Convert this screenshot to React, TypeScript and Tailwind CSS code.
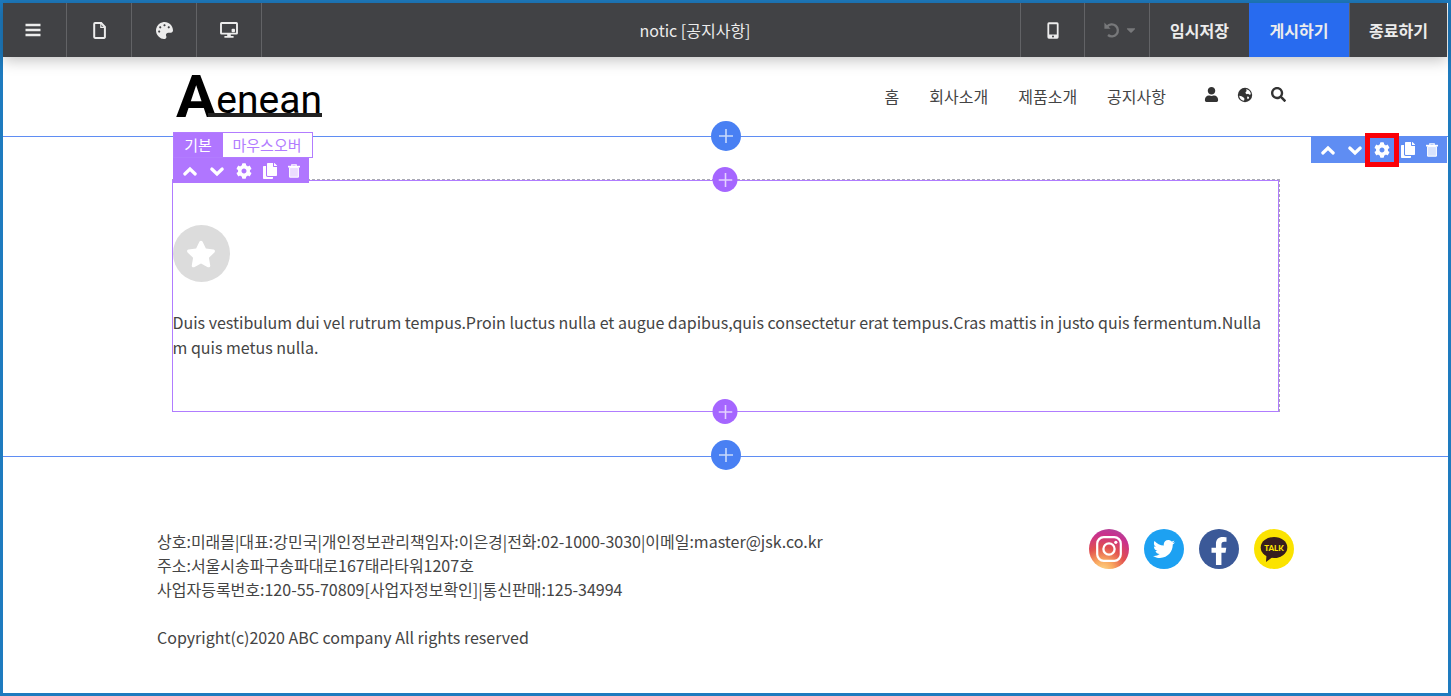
import type { ReactNode } from 'react'
import { FaCaretDown, FaCog, FaCopy, FaFacebookF, FaPalette, FaSearch, FaStar, FaTwitter, FaUser } from 'react-icons/fa'

const menu = ['홈', '회사소개', '제품소개', '공지사항']

function MenuIcon() {
  return (
    <svg viewBox="0 0 16 16" className="size-4" stroke="currentColor" strokeWidth="2.6" aria-hidden="true">
      <path d="M.5 3h15M.5 8h15M.5 13h15" />
    </svg>
  )
}

function FileIcon() {
  return (
    <svg viewBox="0 0 13 17" className="h-[17px] w-[13px]" fill="none" stroke="currentColor" aria-hidden="true">
      <path d="M2 1.1h6.2L11.9 5v10.1a.8.8 0 0 1-.8.8H2a.8.8 0 0 1-.8-.8V1.9a.8.8 0 0 1 .8-.8z" strokeWidth="2" />
      <path d="M7.8 1.2v4.1h4" strokeWidth="1.2" />
    </svg>
  )
}

function MonitorIcon() {
  return (
    <svg viewBox="0 0 18 16" className="h-4 w-[18px]" fill="none" aria-hidden="true">
      <rect x="1" y="1" width="16" height="10.6" rx="0.6" stroke="currentColor" strokeWidth="1.9" />
      <rect x="11.6" y="6.8" width="3.4" height="3.4" rx="0.9" fill="currentColor" />
      <path d="M7.2 12h3.6v2h2.8v1.8H4.4V14h2.8z" fill="currentColor" />
    </svg>
  )
}

function PhoneIcon() {
  return (
    <svg viewBox="0 0 12 17" className="h-[17px] w-3" aria-hidden="true">
      <path
        d="M2 .3h8A1.6 1.6 0 0 1 11.6 2v13a1.6 1.6 0 0 1-1.6 1.7H2A1.6 1.6 0 0 1 .4 15V2A1.6 1.6 0 0 1 2 .3zM2.2 2.2v10.2h7.6V2.2zM6 13.5a1 1 0 1 0 0 2 1 1 0 0 0 0-2z"
        fill="currentColor"
        fillRule="evenodd"
      />
    </svg>
  )
}

function UndoIcon() {
  return (
    <svg viewBox="0 0 16 16" className="size-4" fill="none" aria-hidden="true">
      <path d="M3.2 4.6A6 6 0 1 1 4 13" stroke="currentColor" strokeWidth="2.3" />
      <path d="M.4.6v6.2h6.2L4.5 4.7z" fill="currentColor" />
    </svg>
  )
}

function GlobeIcon() {
  return (
    <svg viewBox="0 0 16 16" className="size-4" aria-hidden="true">
      <circle cx="8" cy="8" r="7.2" fill="currentColor" />
      <path d="M9 2.2a6 6 0 0 1 4.9 5l-1.4.5-1.4-1-1.4.6-1.3-1.2.3-1.2 1-.9z" fill="white" />
      <path d="M2.2 8.7l2.4.5 2 1.2.9 1.4-.5 2a6 6 0 0 1-4.8-5.1z" fill="white" />
      <path d="M10.6 9.3l1.3.6.2 1.2-1.2 1.2-.9-1.2z" fill="white" />
    </svg>
  )
}

function ChevronIcon({ d }: { d: string }) {
  return (
    <svg viewBox="0 0 16 16" className="size-4" fill="none" stroke="currentColor" strokeWidth="3.2" aria-hidden="true">
      <path d={d} strokeLinecap="round" />
    </svg>
  )
}

function TrashIcon() {
  return (
    <svg viewBox="0 0 12 14" className="h-3.5 w-3" aria-hidden="true">
      <path d="M3.8 2V.8h4.4V2" fill="none" stroke="currentColor" strokeWidth="1.2" />
      <path d="M0 1.8h12v1.7H0z" fill="currentColor" />
      <path d="M1.6 3.6h8.8v9.6H1.6z" fill="currentColor" fillOpacity="0.75" stroke="currentColor" />
    </svg>
  )
}

function InstagramIcon() {
  return (
    <svg viewBox="0 0 26 26" className="size-[26px]" fill="none" stroke="currentColor" aria-hidden="true">
      <rect x="1.2" y="1.2" width="23.6" height="23.6" rx="6.5" strokeWidth="2.2" />
      <circle cx="13" cy="13" r="5.6" strokeWidth="2.3" />
      <circle cx="19.8" cy="6.3" r="1.6" fill="currentColor" stroke="none" />
    </svg>
  )
}

function BarButton({ label, className, children }: { label?: string; className?: string; children: ReactNode }) {
  return (
    <button
      type="button"
      aria-label={label}
      className={`flex h-full items-center justify-center border-[#626366] ${className ?? ''}`}
    >
      {children}
    </button>
  )
}

function TopBar() {
  return (
    <header className="relative z-10 mr-px flex h-[54px] items-center bg-[#414245] text-[#ececec] shadow-[0_3px_14px_rgba(0,0,0,0.25)]">
      <div className="flex h-full flex-1">
        <BarButton label="메뉴" className="w-16 border-r pr-1">
          <MenuIcon />
        </BarButton>
        <BarButton label="페이지" className="w-[65px] border-r">
          <FileIcon />
        </BarButton>
        <BarButton label="디자인" className="w-[65px] border-r">
          <FaPalette className="size-[17px]" />
        </BarButton>
        <BarButton label="화면" className="w-[65px] border-r">
          <MonitorIcon />
        </BarButton>
      </div>
      <h1 className="pr-[60px] text-base">notic [공지사항]</h1>
      <div className="flex h-full flex-1 justify-end font-bold">
        <BarButton label="모바일" className="w-16 border-l">
          <PhoneIcon />
        </BarButton>
        <BarButton label="실행 취소" className="w-[65px] gap-1 border-l pl-2 text-[#77787a]">
          <UndoIcon />
          <FaCaretDown className="size-3.5" />
        </BarButton>
        <BarButton className="w-[100px] border-l">임시저장</BarButton>
        <BarButton className="w-[100px] bg-[#286bef]">게시하기</BarButton>
        <BarButton className="w-[98px] border-l">종료하기</BarButton>
      </div>
    </header>
  )
}

function SiteHeader() {
  return (
    <div className="mx-auto flex h-[79px] w-full max-w-[1121px] items-center justify-between pl-[11px]">
      <a href="#" className="flex items-end font-[Roboto,sans-serif] text-black">
        <span className="text-[60px] leading-[41px] font-bold">A</span>
        <span className="-ml-2 border-b-4 border-[#222] pl-2 text-[39px] leading-[25px]">enean</span>
      </a>
      <nav className="flex items-center pb-[2px] text-base text-[#444]">
        <div className="flex gap-[30px]">
          {menu.map((item) => (
            <a key={item} href="#">
              {item}
            </a>
          ))}
        </div>
        <div className="ml-[38px] flex gap-[18px] pb-[2px] text-[#333]">
          <a href="#" aria-label="로그인">
            <FaUser className="size-[15px]" />
          </a>
          <a href="#" aria-label="언어">
            <GlobeIcon />
          </a>
          <a href="#" aria-label="검색">
            <FaSearch className="size-[15px]" />
          </a>
        </div>
      </nav>
    </div>
  )
}

function Tools({ className, marked }: { className: string; marked?: boolean }) {
  return (
    <div className={`flex items-center gap-[11px] px-[9px] text-white ${className}`}>
      <button type="button" aria-label="위로">
        <ChevronIcon d="M2.8 11L8 6l5.2 5" />
      </button>
      <button type="button" aria-label="아래로">
        <ChevronIcon d="M2.8 6L8 11l5.2-5" />
      </button>
      <button type="button" aria-label="설정" className="relative">
        <FaCog className="size-4" />
        {marked && <span className="absolute -inset-[9px] border-5 border-[#fb0007]" />}
      </button>
      <button type="button" aria-label="복사">
        <FaCopy className="h-4 w-3.5" />
      </button>
      <button type="button" aria-label="삭제">
        <TrashIcon />
      </button>
    </div>
  )
}

function AddButton({ className, label }: { className: string; label: string }) {
  return (
    <button
      type="button"
      aria-label={label}
      className={`absolute left-1/2 flex -translate-x-1/2 items-center justify-center rounded-full text-white/70 ${className}`}
    >
      <svg viewBox="0 0 14 14" className="size-3.5" stroke="currentColor" strokeWidth="1.6" aria-hidden="true">
        <path d="M7 0v14M0 7h14" />
      </svg>
    </button>
  )
}

function EditSection() {
  return (
    <section className="relative border-y border-[#5f8df3] pt-[42px] pb-11">
      <AddButton label="섹션 위에 추가" className="-top-4 size-[30px] bg-[#4980f3]" />
      <AddButton label="섹션 아래에 추가" className="-bottom-[14px] size-[30px] bg-[#4980f3]" />
      <Tools marked className="absolute top-0 right-px h-[26px] bg-[#5f8df3]" />

      <div className="mx-auto w-full max-w-[1108px] border-t border-r border-dashed border-[#a9a9b4]">
        <div className="relative border border-solid border-[#b07cff] pt-11 pb-[51px]">
          <AddButton label="위에 추가" className="-top-[14px] size-[25px] bg-[#a566ff]" />
          <AddButton label="아래에 추가" className="-bottom-[13px] size-[25px] bg-[#a566ff]" />
          <div className="absolute -top-[49px] left-0 flex flex-col items-start">
            <div className="flex h-[26px] border border-[#b27cff] bg-white text-[15px] leading-6">
              <button type="button" className="w-[49px] bg-[#b076ff] text-white">
                기본
              </button>
              <button type="button" className="w-[89px] text-[#b27cff]">
                마우스오버
              </button>
            </div>
            <Tools className="h-[25px] bg-[#b076ff]" />
          </div>

          <div className="flex size-[57px] items-center justify-center rounded-full bg-[#dcdcdc] text-white">
            <FaStar className="size-[30px]" />
          </div>
          <p className="mt-7 pr-2 text-base leading-[25px] break-all text-[#444]">
            Duis vestibulum dui vel rutrum tempus.Proin luctus nulla et augue dapibus,quis consectetur erat tempus.Cras
            mattis in justo quis fermentum.Nullam quis metus nulla.
          </p>
        </div>
      </div>
    </section>
  )
}

function SocialLinks() {
  return (
    <div className="flex gap-[15px] text-white">
      <a
        href="#"
        aria-label="Instagram"
        className="flex size-10 items-center justify-center rounded-full bg-[radial-gradient(circle_at_35%_105%,#fdd888_0%,#f9a860_22%,#e1504f_48%,#c9308e_75%,#9d55a4_100%)]"
      >
        <InstagramIcon />
      </a>
      <a href="#" aria-label="Twitter" className="flex size-10 items-center justify-center rounded-full bg-[#1da1f2]">
        <FaTwitter className="size-[22px]" />
      </a>
      <a href="#" aria-label="Facebook" className="flex size-10 items-end justify-center rounded-full bg-[#3b5998]">
        <FaFacebookF className="mb-1 size-7" />
      </a>
      <a href="#" aria-label="KakaoTalk" className="flex size-10 items-center justify-center rounded-full bg-[#fbe300]">
        <svg viewBox="0 0 40 40" className="size-10" aria-hidden="true">
          <ellipse cx="20" cy="18.5" rx="13.3" ry="10.5" fill="#371d1e" />
          <path d="M12.5 26l-.5 7 6.5-5z" fill="#371d1e" />
          <text x="20" y="22" textAnchor="middle" fontSize="8" fontWeight="900" fill="#fbe300" fontFamily="Lato, sans-serif">
            TALK
          </text>
        </svg>
      </a>
    </div>
  )
}

function Footer() {
  return (
    <footer className="mx-auto flex w-full max-w-[1137px] items-start justify-between pt-[72px] pb-11">
      <div className="text-base leading-6 text-[#444]">
        <p>상호:미래몰|대표:강민국|개인정보관리책임자:이은경|전화:02-1000-3030|이메일:master@jsk.co.kr</p>
        <p>주소:서울시송파구송파대로167태라타워1207호</p>
        <p>사업자등록번호:120-55-70809[사업자정보확인]|통신판매:125-34994</p>
        <p className="mt-6">Copyright(c)2020 ABC company All rights reserved</p>
      </div>
      <SocialLinks />
    </footer>
  )
}

export default function App() {
  return (
    <div className="min-h-screen border-3 border-[#1e7bbf] bg-white font-['Noto_Sans_CJK_KR',sans-serif]">
      <TopBar />
      <SiteHeader />
      <EditSection />
      <Footer />
    </div>
  )
}
